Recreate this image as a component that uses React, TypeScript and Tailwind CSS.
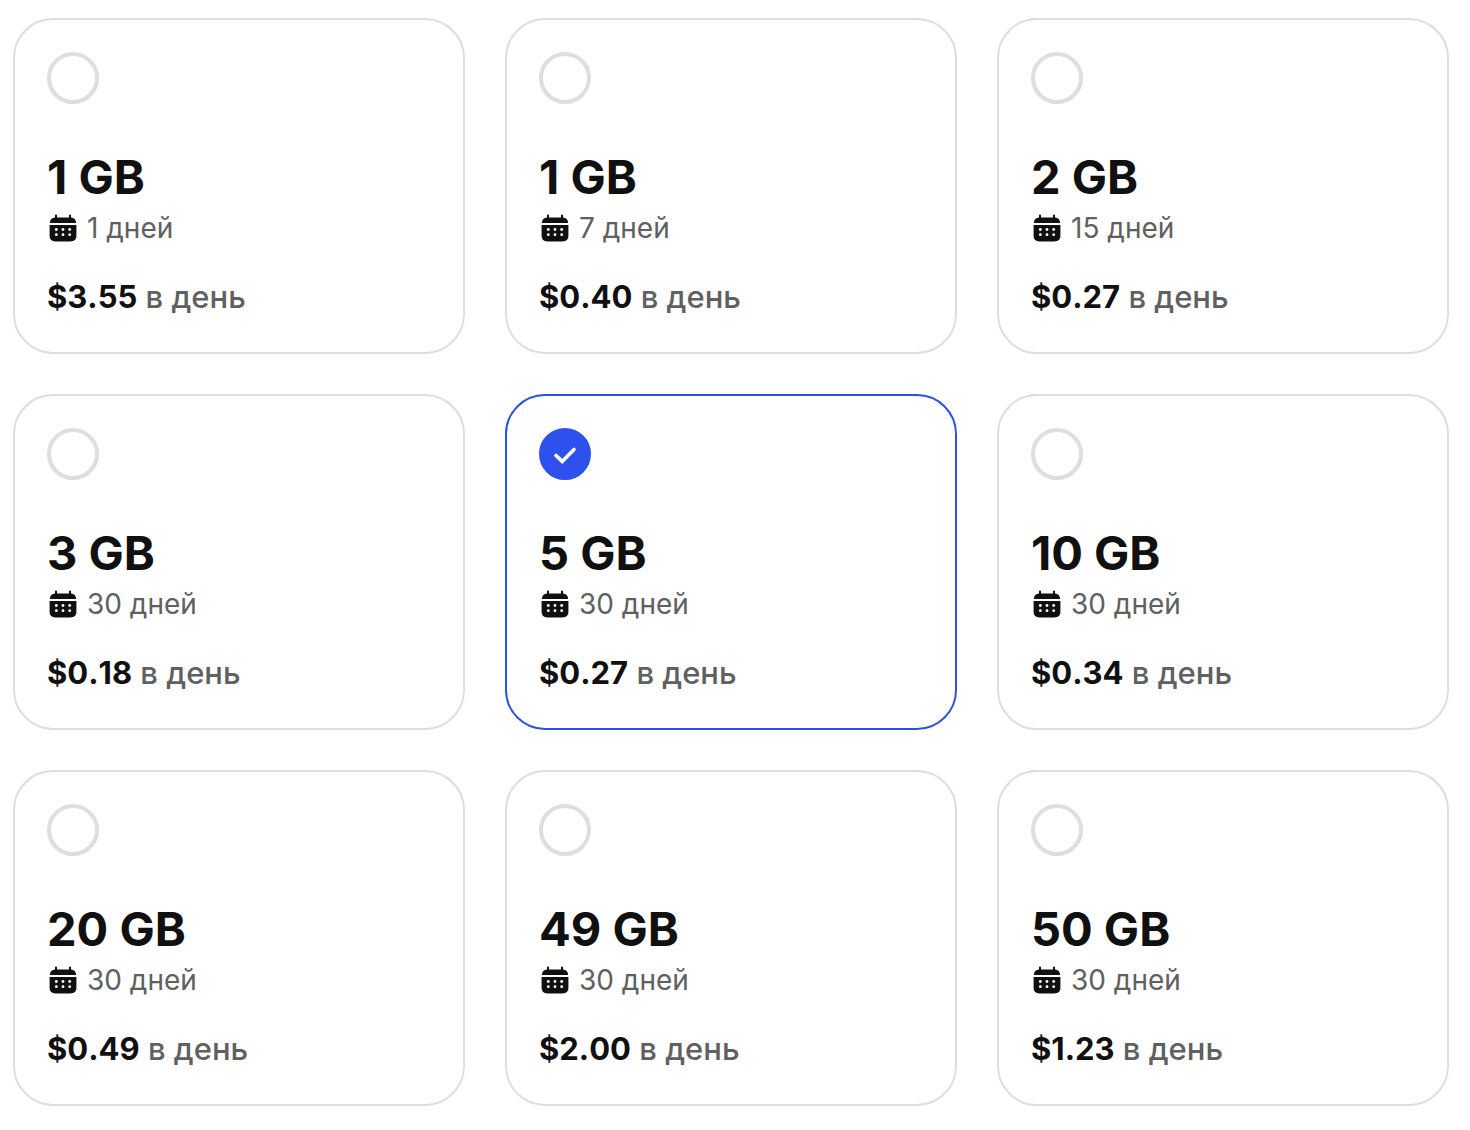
import { useState } from "react";
import { clsx } from "clsx";

type Plan = {
  id: string;
  size: string;
  days: number;
  price: string;
};

const PLANS: Plan[] = [
  { id: "1gb-1", size: "1 GB", days: 1, price: "$3.55" },
  { id: "1gb-7", size: "1 GB", days: 7, price: "$0.40" },
  { id: "2gb-15", size: "2 GB", days: 15, price: "$0.27" },
  { id: "3gb-30", size: "3 GB", days: 30, price: "$0.18" },
  { id: "5gb-30", size: "5 GB", days: 30, price: "$0.27" },
  { id: "10gb-30", size: "10 GB", days: 30, price: "$0.34" },
  { id: "20gb-30", size: "20 GB", days: 30, price: "$0.49" },
  { id: "49gb-30", size: "49 GB", days: 30, price: "$2.00" },
  { id: "50gb-30", size: "50 GB", days: 30, price: "$1.23" },
];

function CalendarIcon() {
  return (
    <svg viewBox="0 0 32 32" className="size-8 shrink-0" aria-hidden="true">
      <path
        fill="#101010"
        d="M8 3.400a1 1 0 0 1 2 0V5.400h12V3.400a1 1 0 0 1 2 0V5.400c3 .2 5 2 5.200 5.600H2.800C3 7.400 5 5.600 8 5.400Z"
      />
      <path fill="#101010" d="M2.600 13h26.800v10.500c0 4-2 5.900-6 5.900H8.600c-4 0-6-1.900-6-5.900Z" />
      <g fill="#fff">
        <circle cx="9.300" cy="17.500" r="1.400" />
        <circle cx="16" cy="17.500" r="1.400" />
        <circle cx="22.700" cy="17.500" r="1.400" />
        <circle cx="9.300" cy="22.700" r="1.400" />
        <circle cx="16" cy="22.700" r="1.400" />
        <circle cx="22.700" cy="22.700" r="1.400" />
      </g>
    </svg>
  );
}

function PlanCard({
  plan,
  selected,
  onSelect,
}: {
  plan: Plan;
  selected: boolean;
  onSelect: (id: string) => void;
}) {
  return (
    <label
      htmlFor={plan.id}
      className={clsx(
        "flex cursor-pointer flex-col rounded-[40px] border-2 bg-white p-8",
        selected ? "border-[#2d50e6]" : "border-[#dedede]"
      )}
    >
      <span className="relative size-13">
        <input
          id={plan.id}
          type="radio"
          name="plan"
          checked={selected}
          onChange={() => onSelect(plan.id)}
          className="block size-13 cursor-pointer appearance-none rounded-full border-4 border-[#dedede] checked:border-[#2e51ed] checked:bg-[#2e51ed]"
        />
        {selected && (
          <svg
            viewBox="0 0 52 52"
            className="pointer-events-none absolute inset-0 size-13"
            aria-hidden="true"
          >
            <path
              d="m17 27.500 6.200 5.900L35 21.500"
              fill="none"
              stroke="#fff"
              strokeWidth="3.600"
              strokeLinecap="round"
            />
          </svg>
        )}
      </span>

      <span className="mt-11 text-[47px] leading-[58px] font-bold text-[#101010]">{plan.size}</span>

      <span className="mt-0.5 flex h-10 items-center gap-2 text-[28px] leading-10 text-[#606060]">
        <CalendarIcon />
        <span>{plan.days} дней</span>
      </span>

      <span className="mt-7 pb-0.5 text-[31px] leading-[42px] font-medium text-[#606060]">
        <span className="font-bold text-[#101010]">{plan.price}</span> в день
      </span>
    </label>
  );
}

export default function App() {
  const [selectedId, setSelectedId] = useState("5gb-30");

  return (
    <main className="min-h-screen bg-white pt-[18px] pr-[21px] pb-6 pl-[13px] font-['Inter',sans-serif] [font-kerning:none]">
      <div role="radiogroup" aria-label="Тариф" className="grid grid-cols-3 gap-10">
        {PLANS.map((plan) => (
          <PlanCard
            key={plan.id}
            plan={plan}
            selected={plan.id === selectedId}
            onSelect={setSelectedId}
          />
        ))}
      </div>
    </main>
  );
}
